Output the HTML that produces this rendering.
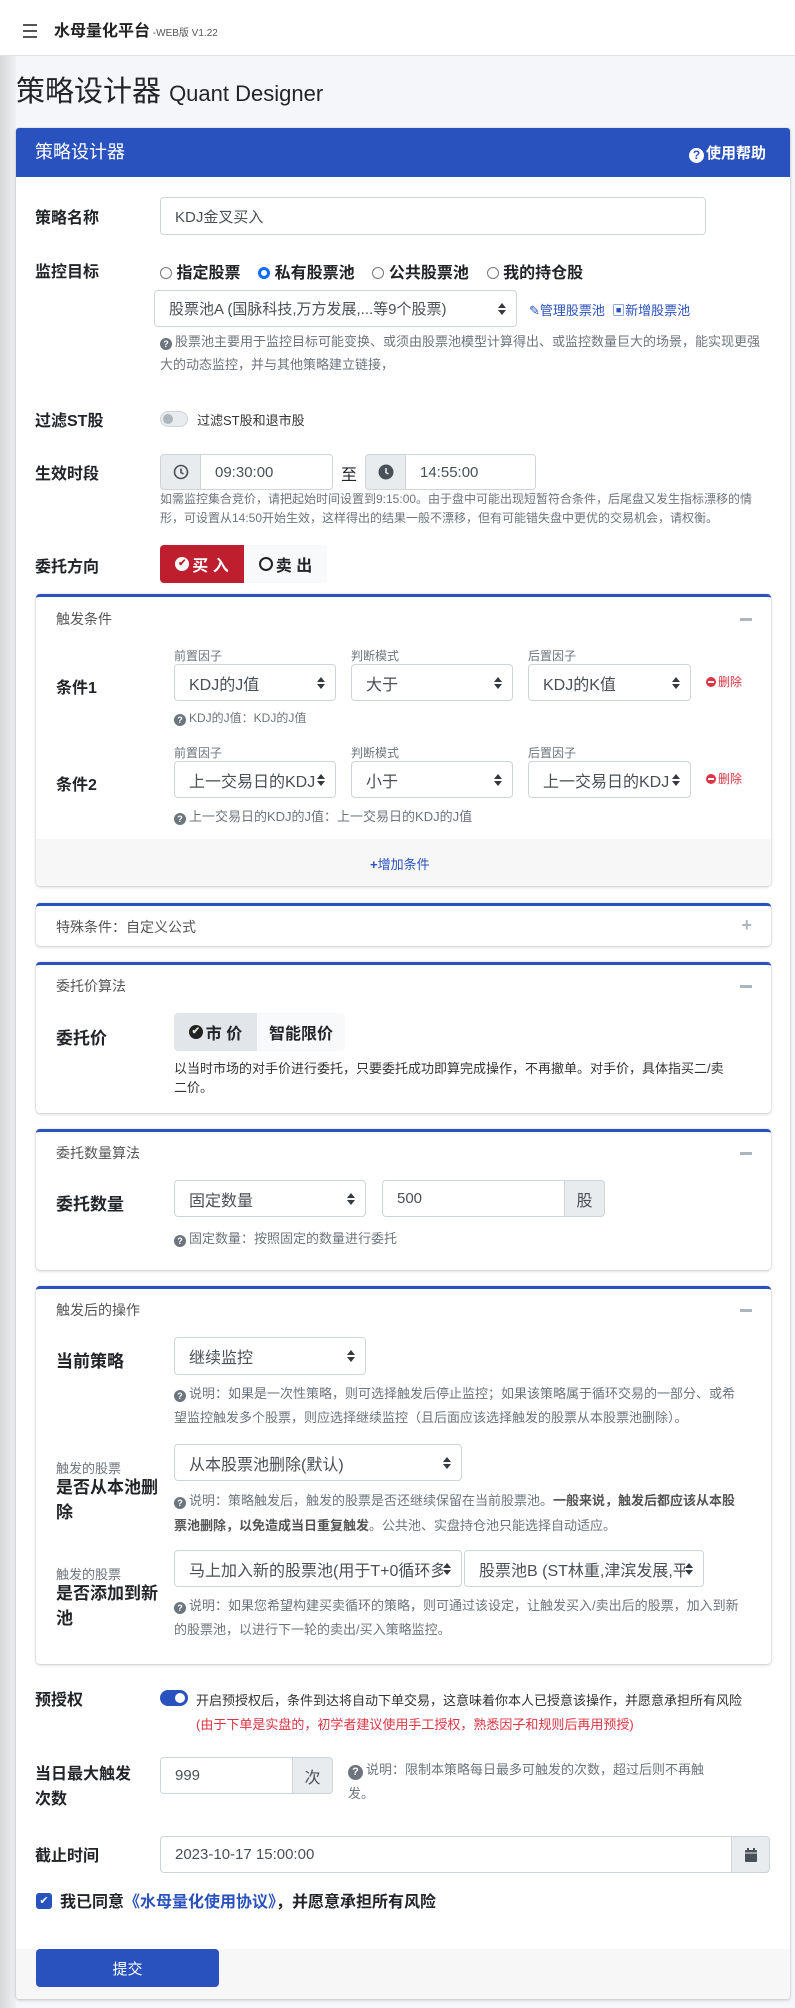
<!DOCTYPE html>
<html><head><meta charset="utf-8">
<style>
*{box-sizing:border-box;margin:0;padding:0}
body{width:795px;height:2008px;position:relative;background:#f4f6f9;font-family:"Liberation Sans","Noto Sans CJK SC",sans-serif;color:#212529;overflow:hidden}
.a{position:absolute;white-space:nowrap}
.lbl{font-size:16px;font-weight:bold;color:#212529}
.help{font-size:13px;color:#6c757d;line-height:23px;white-space:normal}
.inp{position:absolute;border:1px solid #ced4da;border-radius:4px;background:#fff;font-size:15px;color:#495057;padding-left:14px;display:flex;align-items:center;white-space:nowrap;overflow:hidden}
.arr{position:absolute;right:10px;top:50%;margin-top:-6px;width:8px;height:12px}
.addon{position:absolute;background:#e9ecef;border:1px solid #ced4da;display:flex;align-items:center;justify-content:center;color:#495057;font-size:15px}
.card{position:absolute;left:36px;width:735px;background:#fff;border-top:3px solid #2a52be;border-radius:4px;box-shadow:0 0 1px rgba(0,0,0,.2),0 1px 3px rgba(0,0,0,.2)}
.ch{position:absolute;left:20px;font-size:14px;color:#555}
.minus{position:absolute;right:19px;width:12px;height:3px;background:#adb5bd}
.small{font-size:12px;color:#6c757d}
.q{display:inline-block;width:12px;height:12px;border-radius:50%;background:#6c757d;color:#fff;font-size:9px;line-height:12px;text-align:center;font-weight:bold;margin-right:3px;vertical-align:-1px}
.del{position:absolute;left:706px;font-size:12px;color:#dc3545}
.del i{display:inline-block;width:10px;height:10px;border-radius:50%;background:#dc3545;position:relative;vertical-align:-1px;margin-right:2px}
.del i:after{content:"";position:absolute;left:2px;top:4px;width:6px;height:2px;background:#fff}
</style></head><body>
<svg width="0" height="0" style="position:absolute"><defs><symbol id="ar" viewBox="0 0 8 12"><path d="M4 0L8 5H0z M4 12L0 7H8z" fill="#343a40"/></symbol></defs></svg>
<div class="a" style="left:0;top:0;width:16px;height:2008px;background:linear-gradient(to right,#d8d8d8,#eef0f3)"></div>
<div class="a" style="left:0;top:0;width:795px;height:56px;background:#fff;border-bottom:1px solid #dee2e6"></div>
<div class="a" style="left:23px;top:30px;width:14px;height:2px;background:#555;box-shadow:0 -6px 0 #555,0 6px 0 #555"></div>
<div class="a" style="left:54px;top:17px;font-size:16px;font-weight:bold;color:#222">水母量化平台<span style="font-size:10px;font-weight:normal;color:#555"> -WEB版 V1.22</span></div>
<div class="a" style="left:16px;top:68px;font-size:29px;color:#212529">策略设计器 <span style="font-size:22px">Quant Designer</span></div>
<div class="a" style="left:16px;top:128px;width:774px;height:1871px;background:#fff;border-radius:3px;box-shadow:0 0 1px rgba(0,0,0,.2),0 1px 3px rgba(0,0,0,.2)"></div>
<div class="a" style="left:16px;top:128px;width:774px;height:49px;background:#2a52be;border-radius:3px 3px 0 0"></div>
<div class="a" style="left:35px;top:138px;font-size:18px;color:#fff">策略设计器</div>
<div class="a" style="left:689px;top:142px;font-size:15px;color:#fff;font-weight:bold"><span style="display:inline-block;width:15px;height:15px;border-radius:50%;background:#fff;color:#2a52be;font-size:12px;line-height:15px;text-align:center;margin-right:2px;vertical-align:-1px">?</span>使用帮助</div>

<div class="a lbl" style="left:35px;top:204px">策略名称</div>
<div class="inp" style="left:160px;top:197px;width:546px;height:38px">KDJ金叉买入</div>

<div class="a lbl" style="left:35px;top:258px">监控目标</div>
<div class="a" style="left:160px;top:259px;font-size:16px;font-weight:bold">
<span style="display:inline-block;width:12px;height:12px;border:1px solid #777;border-radius:50%;vertical-align:-1px"></span> 指定股票&nbsp;&nbsp;&nbsp;
<span style="display:inline-block;width:12px;height:12px;border:3px solid #0d6efd;border-radius:50%;vertical-align:-1px"></span> 私有股票池&nbsp;&nbsp;&nbsp;
<span style="display:inline-block;width:12px;height:12px;border:1px solid #777;border-radius:50%;vertical-align:-1px"></span> 公共股票池&nbsp;&nbsp;&nbsp;
<span style="display:inline-block;width:12px;height:12px;border:1px solid #777;border-radius:50%;vertical-align:-1px"></span> 我的持仓股</div>
<div class="inp" style="left:154px;top:290px;width:363px;height:37px;font-size:15px">股票池A (国脉科技,万方发展,...等9个股票)<svg class="arr"><use href="#ar"/></svg></div>
<div class="a" style="left:529px;top:300px;font-size:13px;color:#2a52be">✎管理股票池&nbsp;&nbsp;▣新增股票池</div>
<div class="a help" style="left:160px;top:330px;width:610px"><span class="q">?</span>股票池主要用于监控目标可能变换、或须由股票池模型计算得出、或监控数量巨大的场景，能实现更强大的动态监控，并与其他策略建立链接，</div>

<div class="a lbl" style="left:35px;top:407px">过滤ST股</div>
<div class="a" style="left:160px;top:411px;width:28px;height:16px;border-radius:8px;background:#e9ecef;border:1px solid #ced4da"><div style="position:absolute;left:2px;top:2px;width:10px;height:10px;border-radius:50%;background:#adb5bd"></div></div>
<div class="a" style="left:197px;top:410px;font-size:13px;color:#333">过滤ST股和退市股</div>

<div class="a lbl" style="left:35px;top:460px">生效时段</div>
<div class="addon" style="left:160px;top:454px;width:41px;height:36px;border-radius:4px 0 0 4px"><svg width="16" height="16" viewBox="0 0 16 16"><circle cx="8" cy="8" r="6.5" fill="none" stroke="#495057" stroke-width="1.6"/><path d="M8 4.5V8.5L10.5 10" fill="none" stroke="#495057" stroke-width="1.6"/></svg></div>
<div class="inp" style="left:200px;top:454px;width:133px;height:36px;border-radius:0 4px 4px 0;padding-left:14px">09:30:00</div>
<div class="a" style="left:341px;top:461px;font-size:16px">至</div>
<div class="addon" style="left:365px;top:454px;width:41px;height:36px;border-radius:4px 0 0 4px"><svg width="16" height="16" viewBox="0 0 16 16"><circle cx="8" cy="8" r="7.5" fill="#495057"/><path d="M8 4V8.5L10.5 10" fill="none" stroke="#e9ecef" stroke-width="1.6"/></svg></div>
<div class="inp" style="left:405px;top:454px;width:131px;height:36px;border-radius:0 4px 4px 0">14:55:00</div>
<div class="a help" style="left:160px;top:490px;width:600px;line-height:19px;font-size:12px">如需监控集合竞价，请把起始时间设置到9:15:00。由于盘中可能出现短暂符合条件，后尾盘又发生指标漂移的情形，可设置从14:50开始生效，这样得出的结果一般不漂移，但有可能错失盘中更优的交易机会，请权衡。</div>

<div class="a lbl" style="left:35px;top:553px">委托方向</div>
<div class="a" style="left:160px;top:545px;width:84px;height:38px;background:#be1e2d;border-radius:4px 0 0 4px;color:#fff;font-size:16px;font-weight:bold;display:flex;align-items:center;justify-content:center"><span style="display:inline-block;width:14px;height:14px;border-radius:50%;background:#fff;color:#be1e2d;font-size:10px;line-height:14px;text-align:center;margin-right:3px">✔</span>买 入</div>
<div class="a" style="left:244px;top:545px;width:83px;height:38px;background:#f8f9fa;border-radius:0 4px 4px 0;font-size:16px;font-weight:bold;display:flex;align-items:center;justify-content:center"><span style="display:inline-block;width:14px;height:14px;border-radius:50%;border:2px solid #222;margin-right:3px"></span>卖 出</div>

<div class="card" style="top:594px;height:292px">
<div class="ch" style="top:12px">触发条件</div><div class="minus" style="top:21px"></div>
<div class="a small" style="left:138px;top:50px">前置因子</div><div class="a small" style="left:315px;top:50px">判断模式</div><div class="a small" style="left:492px;top:50px">后置因子</div>
<div class="a lbl" style="left:20px;top:77px">条件1</div>
<div class="inp" style="left:138px;top:67px;width:162px;height:37px;font-size:16px">KDJ的J值<svg class="arr"><use href="#ar"/></svg></div>
<div class="inp" style="left:315px;top:67px;width:162px;height:37px;font-size:16px">大于<svg class="arr"><use href="#ar"/></svg></div>
<div class="inp" style="left:492px;top:67px;width:163px;height:37px;font-size:16px">KDJ的K值<svg class="arr"><use href="#ar"/></svg></div>
<div class="del" style="left:670px;top:76px"><i></i>删除</div>
<div class="a small" style="left:138px;top:112px"><span class="q">?</span>KDJ的J值：KDJ的J值</div>
<div class="a small" style="left:138px;top:147px">前置因子</div><div class="a small" style="left:315px;top:147px">判断模式</div><div class="a small" style="left:492px;top:147px">后置因子</div>
<div class="a lbl" style="left:20px;top:174px">条件2</div>
<div class="inp" style="left:138px;top:164px;width:162px;height:37px;font-size:16px">上一交易日的KDJ<svg class="arr" style="background:#fff"><use href="#ar"/></svg></div>
<div class="inp" style="left:315px;top:164px;width:162px;height:37px;font-size:16px">小于<svg class="arr"><use href="#ar"/></svg></div>
<div class="inp" style="left:492px;top:164px;width:163px;height:37px;font-size:16px">上一交易日的KDJ<svg class="arr" style="background:#fff"><use href="#ar"/></svg></div>
<div class="del" style="left:670px;top:173px"><i></i>删除</div>
<div class="a small" style="left:138px;top:209px;font-size:13px"><span class="q">?</span>上一交易日的KDJ的J值：上一交易日的KDJ的J值</div>
<div class="a" style="left:0;top:242px;width:735px;height:47px;background:#f7f7f7;border-radius:0 0 4px 4px"></div>
<div class="a" style="left:334px;top:257px;font-size:13px;color:#2a52be"><b>+</b>增加条件</div>
</div>

<div class="card" style="top:903px;height:43px">
<div class="ch" style="top:11px">特殊条件：自定义公式</div>
<div class="a" style="right:19px;top:9px;font-size:18px;color:#adb5bd;font-weight:bold">+</div>
</div>

<div class="card" style="top:962px;height:151px">
<div class="ch" style="top:11px">委托价算法</div><div class="minus" style="top:20px"></div>
<div class="a lbl" style="left:20px;top:59px;font-size:17px">委托价</div>
<div class="a" style="left:138px;top:48px;width:83px;height:38px;background:#e2e6ea;border-radius:4px 0 0 4px;font-size:16px;font-weight:bold;display:flex;align-items:center;justify-content:center"><span style="display:inline-block;width:14px;height:14px;border-radius:50%;background:#222;color:#e2e6ea;font-size:10px;line-height:14px;text-align:center;margin-right:3px">✔</span>市 价</div>
<div class="a" style="left:221px;top:48px;width:88px;height:38px;background:#f8f9fa;border-radius:0 4px 4px 0;font-size:16px;font-weight:bold;display:flex;align-items:center;justify-content:center">智能限价</div>
<div class="a help" style="left:138px;top:94px;width:562px;line-height:19px;color:#333">以当时市场的对手价进行委托，只要委托成功即算完成操作，不再撤单。对手价，具体指买二/卖二价。</div>
</div>

<div class="card" style="top:1129px;height:141px">
<div class="ch" style="top:11px">委托数量算法</div><div class="minus" style="top:20px"></div>
<div class="a lbl" style="left:20px;top:58px;font-size:17px">委托数量</div>
<div class="inp" style="left:138px;top:48px;width:192px;height:37px;font-size:16px">固定数量<svg class="arr"><use href="#ar"/></svg></div>
<div class="inp" style="left:346px;top:48px;width:183px;height:37px;border-radius:4px 0 0 4px">500</div>
<div class="addon" style="left:528px;top:48px;width:41px;height:37px;border-radius:0 4px 4px 0;font-size:16px">股</div>
<div class="a small" style="left:138px;top:96px;font-size:13px"><span class="q">?</span>固定数量：按照固定的数量进行委托</div>
</div>

<div class="card" style="top:1286px;height:378px">
<div class="ch" style="top:11px">触发后的操作</div><div class="minus" style="top:20px"></div>
<div class="a lbl" style="left:20px;top:58px;font-size:17px">当前策略</div>
<div class="inp" style="left:138px;top:48px;width:192px;height:38px;font-size:16px">继续监控<svg class="arr"><use href="#ar"/></svg></div>
<div class="a help" style="left:138px;top:93px;width:562px;line-height:24px"><span class="q">?</span>说明：如果是一次性策略，则可选择触发后停止监控；如果该策略属于循环交易的一部分、或希望监控触发多个股票，则应选择继续监控（且后面应该选择触发的股票从本股票池删除）。</div>
<div class="a small" style="left:20px;top:169px;font-size:13px">触发的股票</div>
<div class="a lbl" style="left:20px;top:186px;white-space:normal;width:105px;line-height:25px;font-size:17px">是否从本池删除</div>
<div class="inp" style="left:138px;top:155px;width:288px;height:37px;font-size:16px">从本股票池删除(默认)<svg class="arr"><use href="#ar"/></svg></div>
<div class="a help" style="left:138px;top:199px;width:562px;line-height:25px"><span class="q">?</span>说明：策略触发后，触发的股票是否还继续保留在当前股票池。<b style="color:#555">一般来说，触发后都应该从本股票池删除，以免造成当日重复触发</b>。公共池、实盘持仓池只能选择自动适应。</div>
<div class="a small" style="left:20px;top:275px;font-size:13px">触发的股票</div>
<div class="a lbl" style="left:20px;top:292px;white-space:normal;width:105px;line-height:25px;font-size:17px">是否添加到新池</div>
<div class="inp" style="left:138px;top:261px;width:288px;height:37px;font-size:16px">马上加入新的股票池(用于T+0循环多<svg class="arr" style="background:#fff"><use href="#ar"/></svg></div>
<div class="inp" style="left:428px;top:261px;width:240px;height:37px;font-size:16px">股票池B (ST林重,津滨发展,平<svg class="arr" style="background:#fff"><use href="#ar"/></svg></div>
<div class="a help" style="left:138px;top:305px;width:566px;line-height:24px"><span class="q">?</span>说明：如果您希望构建买卖循环的策略，则可通过该设定，让触发买入/卖出后的股票，加入到新的股票池，以进行下一轮的卖出/买入策略监控。</div>
</div>

<div class="a lbl" style="left:35px;top:1686px">预授权</div>
<div class="a" style="left:160px;top:1690px;width:28px;height:16px;border-radius:8px;background:#2a52be"><div style="position:absolute;right:3px;top:3px;width:10px;height:10px;border-radius:50%;background:#fff"></div></div>
<div class="a" style="left:196px;top:1690px;font-size:13px;color:#333">开启预授权后，条件到达将自动下单交易，这意味着你本人已授意该操作，并愿意承担所有风险</div>
<div class="a" style="left:196px;top:1714px;font-size:13px;color:#dc3545">(由于下单是实盘的，初学者建议使用手工授权，熟悉因子和规则后再用预授)</div>

<div class="a lbl" style="left:35px;top:1762px;white-space:normal;width:100px;line-height:25px">当日最大触发次数</div>
<div class="inp" style="left:160px;top:1757px;width:133px;height:37px;border-radius:4px 0 0 4px">999</div>
<div class="addon" style="left:292px;top:1757px;width:41px;height:37px;border-radius:0 4px 4px 0;font-size:16px">次</div>
<div class="a help" style="left:348px;top:1758px;width:360px;line-height:24px"><span class="q" style="width:15px;height:15px;line-height:15px;font-size:11px">?</span>说明：限制本策略每日最多可触发的次数，超过后则不再触发。</div>

<div class="a lbl" style="left:35px;top:1842px">截止时间</div>
<div class="inp" style="left:160px;top:1836px;width:572px;height:37px;border-radius:4px 0 0 4px">2023-10-17 15:00:00</div>
<div class="addon" style="left:731px;top:1836px;width:39px;height:37px;border-radius:0 4px 4px 0"><svg width="12" height="14" viewBox="0 0 12 14"><rect x="0" y="2" width="12" height="12" rx="1" fill="#495057"/><rect x="2" y="0" width="2" height="4" fill="#495057"/><rect x="8" y="0" width="2" height="4" fill="#495057"/><rect x="0" y="4.5" width="12" height="1" fill="#e9ecef"/></svg></div>

<div class="a" style="left:36px;top:1893px;width:16px;height:16px;border-radius:3px;background:#2a52be;color:#fff;font-size:11px;line-height:16px;text-align:center">✔</div>
<div class="a" style="left:60px;top:1888px;font-size:16px;font-weight:bold">我已同意<span style="color:#2a52be">《水母量化使用协议》</span>，并愿意承担所有风险</div>

<div class="a" style="left:16px;top:1949px;width:774px;height:50px;background:#f7f7f7;border-radius:0 0 3px 3px"></div>
<div class="a" style="left:36px;top:1949px;width:183px;height:38px;background:#2a52be;border-radius:4px;color:#fff;font-size:15px;display:flex;align-items:center;justify-content:center">提交</div>
</body></html>
